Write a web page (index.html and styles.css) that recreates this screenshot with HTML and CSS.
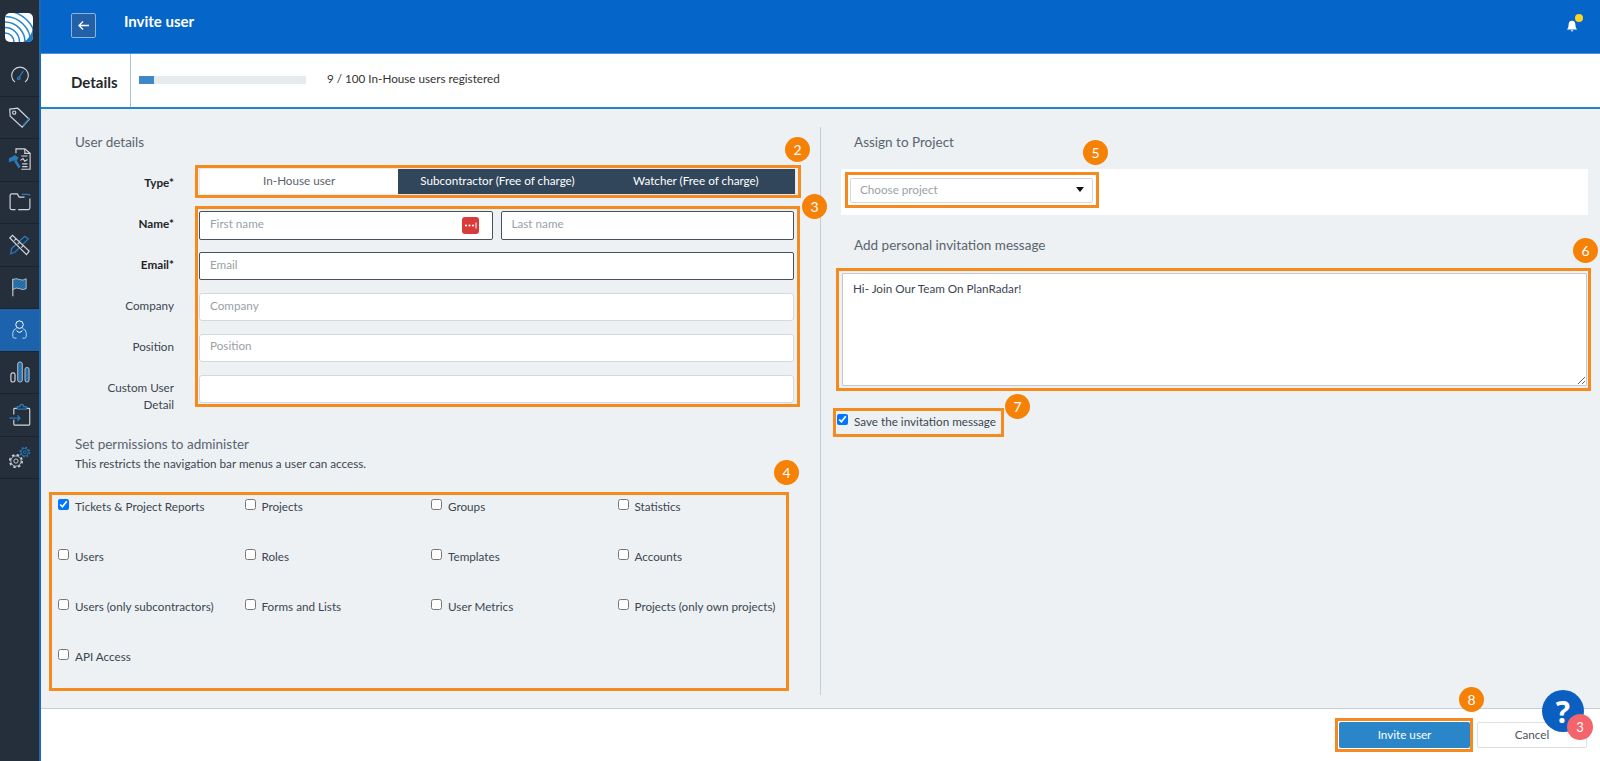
FILE: index.html
```html
<!DOCTYPE html>
<html lang="en">
<head>
  <meta charset="UTF-8">
  <meta name="viewport" content="width=device-width, initial-scale=1.0">
  <title>Invite user</title>
  <link rel="stylesheet" href="styles.css">
</head>
<body>

  <!-- Sidebar -->
  <nav class="sidebar">
    <div class="logo">
      <svg width="28" height="29" viewBox="0 0 28 29">
        <clipPath id="logo-clip"><rect width="28" height="29" rx="5"/></clipPath>
        <g clip-path="url(#logo-clip)" fill="none">
          <rect width="28" height="29" fill="#fff"/>
          <circle cx="0" cy="29" r="9" stroke="#2a86cc" stroke-width="1.500"/>
          <circle cx="0" cy="29" r="14.500" stroke="#2a86cc" stroke-width="1.500"/>
          <circle cx="0" cy="29" r="20" stroke="#2a86cc" stroke-width="1.500"/>
          <circle cx="0" cy="29" r="25.500" stroke="#2a86cc" stroke-width="1.500"/>
          <circle cx="0" cy="29" r="31" stroke="#2a86cc" stroke-width="1.500"/>
          <path d="M18 29Q27 25 28 13V29Z" fill="#1d7cc4"/>
        </g>
      </svg>
    </div>
    <a class="nav-item">
      <svg width="20" height="20" viewBox="0 0 24 24" fill="none">
        <path d="M6 20.500A10 10 0 1 1 18 20.500" class="ic"/>
        <path d="M10.500 15.500L16 7" class="ib"/><circle cx="10.500" cy="16" r="1.600" class="ib"/>
      </svg>
    </a>
    <a class="nav-item">
      <svg width="23" height="23" viewBox="0 0 26 26" fill="none">
        <path d="M2 3.500L11 2.500L24 15L16 24L2.500 11.500Z" class="ic"/>
        <circle cx="7" cy="7.500" r="1.800" class="ic"/>
        <path d="M24.500 13.500L17 22" class="ib"/>
      </svg>
    </a>
    <a class="nav-item">
      <svg width="23" height="25" viewBox="0 0 26 28" fill="none">
        <path d="M9 7V2H19L25 7V25H15" class="ic"/><path d="M19 2V7H25" class="ic"/>
        <path d="M15 10H22M16 19H22M16 22H22" class="ic"/><path d="M14 15L17 13L19 16L22 14" class="ic"/>
        <path d="M1 13L8 9L12 12L10 15L7 15L1 17Z" fill="#2a7ab8"/><path d="M8 15L13 23" stroke="#2a7ab8" stroke-width="3"/>
      </svg>
    </a>
    <a class="nav-item">
      <svg width="22" height="18" viewBox="0 0 24 20" fill="none">
        <path d="M7 18.500H3Q1 18.500 1 16.500V3Q1 1 3 1H9L11 4.500H17" class="ic"/>
        <path d="M10 18.500H21Q23 18.500 23 16.500V6" class="ic"/>
        <path d="M14 1.500H21Q23 1.500 23 3" class="ib"/>
      </svg>
    </a>
    <a class="nav-item">
      <svg width="21" height="22" viewBox="0 0 24 24" fill="none">
        <path d="M3 16L18 2L22 5L7 20L2 22Z" class="ib"/>
        <path d="M1 4L4 1L23 19L20 23Z" fill="#252f3c" stroke="#d3d6da" stroke-width="1.400"/>
        <path d="M6 7L8 5M10 11L12 9M14 15L16 13" class="ic"/>
      </svg>
    </a>
    <a class="nav-item">
      <svg width="17" height="20" viewBox="0 0 20 24" fill="none">
        <pattern id="hatch" width="2.500" height="2.500" patternUnits="userSpaceOnUse" patternTransform="rotate(45)">
          <rect width="2.500" height="2.500" fill="#2a7ab8"/><path d="M0 0V2.500" stroke="#143f63" stroke-width="1"/>
        </pattern>
        <path d="M2 2V23" class="ic"/>
        <path d="M2 3Q6 1 10 3T18 2V14Q14 16 10 14T2 15Z" fill="url(#hatch)" stroke="#c8ccd2" stroke-width="1"/>
      </svg>
    </a>
    <a class="nav-item active">
      <svg width="15" height="21" viewBox="0 0 20 26" fill="none">
        <circle cx="10" cy="6.500" r="5" stroke="#fff" stroke-width="1.300"/>
        <path d="M6 11.500Q1 13 1 18V22Q1 24.500 3.500 24.500H6M14 24.500H16.500Q19 24.500 19 22V18Q19 13 14 11.500" stroke="#b9dcf7" stroke-width="1.300"/>
        <path d="M6 14.500Q10 19 14 14.500" stroke="#fff" stroke-width="1.300"/>
      </svg>
    </a>
    <a class="nav-item">
      <svg width="20" height="22" viewBox="0 0 22 24" fill="none">
        <rect x="1" y="13" width="4.500" height="10" rx="2" class="ic"/><rect x="8.500" y="1" width="5" height="22" rx="2.200" fill="url(#hatch)" stroke="#c8ccd2"/><rect x="16.500" y="7" width="4.500" height="16" rx="2" fill="url(#hatch)" stroke="#c8ccd2"/>
      </svg>
    </a>
    <a class="nav-item">
      <svg width="22" height="23" viewBox="0 0 24 26" fill="none">
        <path d="M9 6H6Q5 6 5 7V13M5 19V24Q5 25 6 25H22Q23 25 23 24V7Q23 6 22 6H19" class="ic"/>
        <path d="M9 6V4H12Q12 1.500 14 1.500T16 4H19V7H9Z" class="ib"/>
        <path d="M0 17H12M9 14L12 17L9 20" class="ib"/>
      </svg>
    </a>
    <a class="nav-item">
      <svg width="23" height="23" viewBox="0 0 26 26" fill="none">
        <circle cx="9" cy="17" r="7" stroke="#d3d6da" stroke-width="1.800" stroke-dasharray="2.750 2.750"/>
        <circle cx="9" cy="17" r="5.800" fill="#252f3c" stroke="#d3d6da" stroke-width=".9"/>
        <circle cx="9" cy="17" r="2.400" stroke="#d3d6da" stroke-width="1"/>
        <circle cx="19" cy="7" r="5.200" stroke="#2a7ab8" stroke-width="1.800" stroke-dasharray="2 2.080"/>
        <circle cx="19" cy="7" r="4.200" fill="#252f3c" stroke="#2a7ab8"/>
        <circle cx="19" cy="7" r="1.600" stroke="#2a7ab8"/>
      </svg>
    </a>
  </nav>

  <div class="main">
    <!-- Header -->
    <header class="topbar">
      <button class="back-btn">
        <svg width="13" height="13" viewBox="0 0 13 13" fill="none"><path d="M12 6.500H2M6 2.500L2 6.500L6 10.500" stroke="#fff" stroke-width="1.300"/></svg>
      </button>
      <h1 class="page-title">Invite user</h1>
      <div class="bell">
        <svg width="12" height="12" viewBox="0 0 14 14"><path d="M7 1Q11 1 11 6Q11 9 13 11H1Q3 9 3 6Q3 1 7 1ZM5.500 12H8.500Q8 13.500 7 13.500T5.500 12Z" fill="#fff"/></svg>
        <span class="bell-dot"></span>
      </div>
    </header>

    <!-- Details bar -->
    <div class="details-bar">
      <div class="details-title">Details</div>
      <div class="progress"><div class="progress-fill" style="width: 9%"></div></div>
      <div class="progress-text">9 / 100 In-House users registered</div>
    </div>

    <div class="content">
      <!-- Columna izquierda -->
      <section class="left-col">
        <h2 class="section-title">User details</h2>

        <div class="type-row">
          <label class="row-label required">Type*</label>
          <div class="mark mark-type">
            <span class="badge badge-2">2</span>
            <div class="tabs">
              <div class="tab tab-active">In-House user</div>
              <div class="tab">Subcontractor (Free of charge)</div>
              <div class="tab">Watcher (Free of charge)</div>
            </div>
          </div>
        </div>

        <div class="fields">
          <div class="field-labels">
            <label class="row-label required">Name*</label>
            <label class="row-label required">Email*</label>
            <label class="row-label">Company</label>
            <label class="row-label">Position</label>
            <label class="row-label">Custom User Detail</label>
          </div>
          <div class="mark mark-fields">
            <span class="badge badge-3">3</span>
            <div class="name-row">
              <div class="input-wrap">
                <input class="input input-req" placeholder="First name">
                <span class="pass-icon">
                  <svg width="17" height="17" viewBox="0 0 17 17"><rect width="17" height="17" rx="3" fill="#d93b3b"/><circle cx="4" cy="8.500" r="1.100" fill="#fff"/><circle cx="7.500" cy="8.500" r="1.100" fill="#fff"/><circle cx="11" cy="8.500" r="1.100" fill="#fff"/><path d="M14 5.500V11.500" stroke="#fff"/></svg>
                </span>
              </div>
              <div class="input-wrap">
                <input class="input input-req" placeholder="Last name">
              </div>
            </div>
            <input class="input input-req" placeholder="Email">
            <input class="input" placeholder="Company">
            <input class="input" placeholder="Position">
            <input class="input">
          </div>
        </div>

        <h2 class="section-title permissions-title">Set permissions to administer</h2>
        <p class="section-sub">This restricts the navigation bar menus a user can access.</p>

        <div class="mark mark-perms">
          <span class="badge badge-4">4</span>
          <div class="perms">
            <label class="check"><input type="checkbox" checked><span>Tickets &amp; Project Reports</span></label>
            <label class="check"><input type="checkbox"><span>Projects</span></label>
            <label class="check"><input type="checkbox"><span>Groups</span></label>
            <label class="check"><input type="checkbox"><span>Statistics</span></label>
            <label class="check"><input type="checkbox"><span>Users</span></label>
            <label class="check"><input type="checkbox"><span>Roles</span></label>
            <label class="check"><input type="checkbox"><span>Templates</span></label>
            <label class="check"><input type="checkbox"><span>Accounts</span></label>
            <label class="check"><input type="checkbox"><span>Users (only subcontractors)</span></label>
            <label class="check"><input type="checkbox"><span>Forms and Lists</span></label>
            <label class="check"><input type="checkbox"><span>User Metrics</span></label>
            <label class="check"><input type="checkbox"><span>Projects (only own projects)</span></label>
            <label class="check"><input type="checkbox"><span>API Access</span></label>
          </div>
        </div>
      </section>

      <!-- Columna derecha -->
      <section class="right-col">
        <h2 class="section-title">Assign to Project</h2>
        <div class="project-strip">
          <div class="mark mark-select">
            <span class="badge badge-5">5</span>
            <div class="select">
              <span>Choose project</span>
              <span class="caret"></span>
            </div>
          </div>
        </div>

        <h2 class="section-title message-title">Add personal invitation message</h2>
        <div class="mark mark-message">
          <span class="badge badge-6">6</span>
          <textarea class="message">Hi- Join Our Team On PlanRadar!</textarea>
        </div>

        <div class="mark mark-save">
          <span class="badge badge-7">7</span>
          <label class="check"><input type="checkbox" checked><span>Save the invitation message</span></label>
        </div>
      </section>
    </div>

    <!-- Footer -->
    <footer class="footer">
      <div class="mark mark-invite">
        <span class="badge badge-8">8</span>
        <button class="btn btn-invite">Invite user</button>
      </div>
      <button class="btn btn-cancel">Cancel</button>
    </footer>
  </div>

  <!-- Ayuda -->
  <div class="help">
    <span class="help-mark">?</span>
    <span class="help-count">3</span>
  </div>

</body>
</html>
```

FILE: styles.css
```css
* {
  box-sizing: border-box;
}

body {
  font-family: Lato, "Liberation Sans", sans-serif;
  font-size: 11.7px;
  color: #3c4650;
  margin: 0;
  height: 100vh;
  overflow: hidden;
  display: flex;
  background-color: #edf1f4;
}

/* Sidebar */
.sidebar {
  width: 41px;
  flex-shrink: 0;
  background-color: #252f3c;
  border-right: 2px solid #1c6ab4;
}

.logo {
  height: 54px;
  padding: 13px 0 0 5px;
}

.nav-item {
  height: 42.5px;
  display: flex;
  align-items: center;
  justify-content: center;
  border-bottom: 1px solid #1b232d;
}

.nav-item.active {
  background-color: #1c62ac;
}

.ic {
  stroke: #d3d6da;
  stroke-width: 1.3;
}

.ib {
  stroke: #2a7ab8;
  stroke-width: 1.5;
}

.main {
  flex: 1;
  display: flex;
  flex-direction: column;
  min-width: 0;
}

/* Header */
.topbar {
  height: 54px;
  display: flex;
  align-items: center;
  padding: 0 22px 8px 30px;
  background-color: #0565c8;
  border-bottom: 1px solid #4b93dc;
}

.back-btn {
  width: 25px;
  height: 25px;
  margin-top: 6px;
  padding: 0;
  display: flex;
  align-items: center;
  justify-content: center;
  background-color: #2261a8;
  border: 1px solid #8db4dc;
  border-radius: 2px;
}

.page-title {
  flex: 1;
  margin: 0 0 3px 28px;
  font-size: 15px;
  font-weight: 700;
  color: #fff;
}

.bell {
  position: relative;
  width: 12px;
  height: 12px;
  margin-top: 7px;
}

.bell-dot {
  position: absolute;
  top: -6px;
  left: 9px;
  width: 8px;
  height: 8px;
  border-radius: 50%;
  background-color: #fdd329;
}

/* Details bar */
.details-bar {
  height: 55px;
  display: flex;
  align-items: center;
  background-color: #fff;
  border-bottom: 2px solid #2284c8;
}

.details-title {
  width: 90px;
  height: 100%;
  padding: 19px 0 0 30px;
  font-size: 15px;
  font-weight: 700;
  color: #23282e;
  border-right: 1px solid #a9c0d2;
}

.progress {
  width: 167px;
  height: 8px;
  margin: 0 21px 1px 8px;
  border-radius: 1px;
  background-color: #e8ebee;
}

.progress-fill {
  height: 100%;
  background-color: #3f87c9;
}

.progress-text {
  margin-bottom: 5px;
  color: #333;
}

.content {
  flex: 1;
  display: flex;
  min-height: 0;
}

.section-title {
  margin: 0;
  font-size: 13.5px;
  line-height: 18px;
  font-weight: 400;
  color: #5a646e;
}

/* Orange annotation boxes */
.mark {
  position: relative;
  border: 3px solid #f58a1f;
}

.badge {
  position: absolute;
  width: 25px;
  height: 25px;
  border-radius: 50%;
  display: flex;
  align-items: center;
  justify-content: center;
  font-size: 14px;
  color: #fff;
  background-color: #f58207;
  z-index: 2;
}

.badge-2 { top: -31px; right: -12px; }
.badge-3 { top: -15px; right: -30px; }
.badge-4 { top: -35px; right: -13px; }
.badge-5 { top: -35px; right: -12px; }
.badge-6 { top: -33px; right: -10px; }
.badge-7 { top: -17px; right: -29px; }
.badge-8 { top: -34px; right: -14px; }

/* Left column */
.left-col {
  width: 779px;
  flex-shrink: 0;
  padding: 24px 0 0 8px;
}

.left-col > .section-title,
.section-sub {
  margin-left: 26px;
}

.type-row,
.fields {
  display: flex;
}

.type-row {
  margin-top: 14px;
}

.fields {
  height: 201px;
  margin-top: 8px;
}

.row-label {
  width: 125px;
  margin-right: 21px;
  flex-shrink: 0;
  text-align: right;
  line-height: 17px;
  color: #3c4650;
}

.required {
  font-weight: 700;
  color: #1f2429;
}

.type-row .row-label {
  padding-top: 9px;
}

.field-labels {
  display: flex;
  flex-direction: column;
  padding-top: 9px;
  gap: 24px;
}

.field-labels .row-label:last-child {
  padding-left: 50px;
}

.mark-type {
  width: 606px;
  padding: 1px 3px 1px 2px;
}

.tabs {
  display: flex;
  height: 25px;
  box-shadow: 0 0 0 1px #e6e9ec;
}

.tab {
  flex: 1;
  display: flex;
  align-items: center;
  justify-content: center;
  padding-bottom: 3px;
  color: #fff;
  background-color: #31465a;
}

.tab-active {
  color: #5a646e;
  background-color: #fff;
}

.mark-fields {
  width: 605px;
  padding: 2px 3px 1px 1px;
  display: flex;
  flex-direction: column;
  gap: 12.5px;
}

.name-row {
  display: flex;
  gap: 8px;
}

.input-wrap {
  position: relative;
  flex: 1 1 0;
  min-width: 0;
}

.input {
  display: block;
  width: 100%;
  height: 28.5px;
  padding: 0 10px 5px;
  font-family: inherit;
  font-size: 11.7px;
  color: #3c4650;
  background-color: #fff;
  border: 1px solid #d5d9dd;
  border-radius: 3px;
  outline: none;
}

.input::placeholder,
.message::placeholder {
  color: #9a9fa5;
  opacity: 1;
}

.input-req {
  border: 1px solid #47525e;
  border-radius: 2px;
}

.pass-icon {
  position: absolute;
  top: 6px;
  right: 14px;
  height: 17px;
}

.left-col > .permissions-title {
  margin-top: 28px;
}

.section-sub {
  margin-top: 2px;
  margin-bottom: 21px;
  line-height: 16px;
  color: #3c4650;
}

.mark-perms {
  width: 740px;
  height: 199px;
  padding: 4px 0 0 6px;
}

.perms {
  display: grid;
  grid-template-columns: repeat(4, 186.5px);
  grid-auto-rows: 50px;
}

.check {
  display: flex;
  align-items: flex-start;
  gap: 6px;
  color: #3c4650;
}

.check input {
  width: 11px;
  height: 11px;
  margin: 0;
  flex-shrink: 0;
}

.check span {
  margin-top: -1px;
  line-height: 16px;
  white-space: nowrap;
}

/* Right column */
.right-col {
  flex: 1;
  margin: 18px 0 13px;
  padding: 6px 12px 0 20px;
  border-left: 1px solid #c5ced6;
}

.right-col > .section-title {
  margin-left: 13px;
}

.project-strip {
  height: 46px;
  margin-top: 18px;
  padding: 3px 0 0 4px;
  background-color: #fff;
}

.mark-select {
  width: 254px;
  padding: 3px 3px 2px 2px;
}

.select {
  height: 25px;
  display: flex;
  align-items: center;
  justify-content: space-between;
  padding: 0 8px 3px 9px;
  color: #9a9fa5;
  background-color: #fff;
  border: 1px solid #d5d9dd;
  border-radius: 2px;
}

.caret {
  width: 0;
  height: 0;
  border-left: 4px solid transparent;
  border-right: 4px solid transparent;
  border-top: 5px solid #111;
}

.right-col > .message-title {
  margin-top: 21px;
}

.mark-message {
  margin: 14px -3px 0 -5px;
  padding: 2px 1px 2px 3px;
}

.message {
  display: block;
  width: 100%;
  height: 113px;
  padding: 6px 10px;
  font-family: inherit;
  font-size: 11.7px;
  line-height: 16px;
  color: #3c4650;
  background-color: #fff;
  border: 1px solid #c4c8cc;
  border-radius: 1px;
  outline: none;
}

.mark-save {
  display: inline-block;
  margin: 17px 0 0 -8px;
  height: 29px;
  padding: 3px 5px 0 1px;
}

/* Footer */
.footer {
  height: 53px;
  display: flex;
  justify-content: flex-end;
  align-items: flex-start;
  padding: 9px 13px 0 0;
  gap: 4px;
  background-color: #fff;
  border-top: 1px solid #c5ced6;
}

.btn {
  height: 26px;
  padding: 0 0 2px;
  font-family: inherit;
  font-size: 11.7px;
  border-radius: 2px;
  cursor: pointer;
}

.mark-invite {
  padding: 1px 0 1px 1px;
}

.btn-invite {
  display: block;
  width: 131px;
  color: #fff;
  background-color: #2a86c9;
  border: none;
}

.btn-cancel {
  width: 110px;
  margin-top: 4px;
  color: #4a545e;
  background-color: #fff;
  border: 1px solid #dde0e3;
}

/* Help bubble */
.help {
  position: absolute;
  right: 16px;
  bottom: 29px;
  width: 42px;
  height: 42px;
  border-radius: 50%;
  display: flex;
  align-items: center;
  justify-content: center;
  background-color: #0b5fc0;
}

.help-mark {
  font-family: "Open Sans", sans-serif;
  font-size: 30px;
  font-weight: 700;
  color: #fff;
}

.help-count {
  position: absolute;
  left: 25px;
  top: 24px;
  width: 26px;
  height: 26px;
  border-radius: 50%;
  display: flex;
  align-items: center;
  justify-content: center;
  font-size: 13px;
  color: #fff;
  background-color: #f4646c;
}
```
